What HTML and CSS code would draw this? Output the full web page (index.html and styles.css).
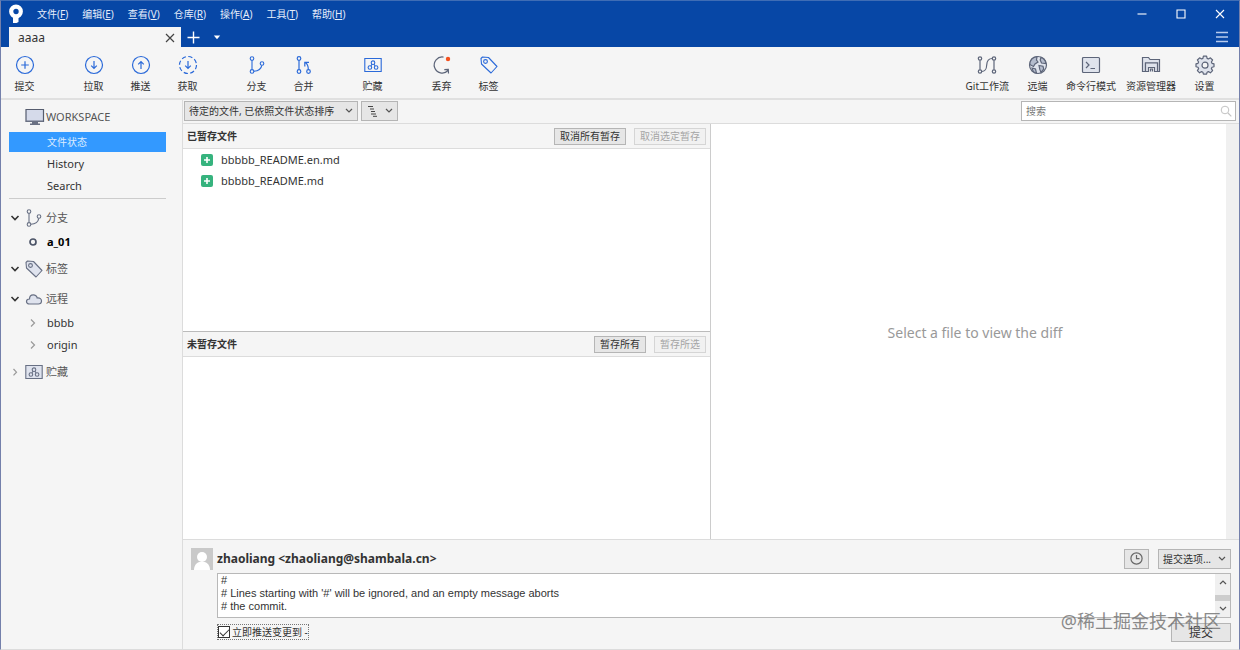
FILE: index.html
```
<!DOCTYPE html>
<html lang="zh-CN">
<head>
<meta charset="utf-8">
<title>aaaa</title>
<link rel="stylesheet" href="styles.css">
</head>
<body>
<svg class="defs" aria-hidden="true">
  <symbol id="chevron" viewBox="0 0 8 6"><path d="M1 1l3 3 3-3" fill="none" stroke="currentColor" stroke-width="1.2"/></symbol>
  <symbol id="branch" viewBox="0 0 18 18"><g fill="none" stroke="currentColor" stroke-width="1.1"><circle cx="4" cy="2.6" r="1.8"/><circle cx="4" cy="15.4" r="1.8"/><circle cx="14" cy="7.5" r="1.8"/><path d="M4 4.4v9.2M5.8 15.2c4-.2 7.400-2.400 8-5.900"/></g></symbol>
  <symbol id="tag" viewBox="0 0 18 18"><g stroke="currentColor" stroke-width="1.1" stroke-linejoin="round"><path d="M1 2.500L2.500 1l6 .5L17 10.500 11 17 1.500 8z"/><circle cx="5.500" cy="5.500" r="1.900"/></g></symbol>
  <symbol id="stash" viewBox="0 0 18 16"><g stroke="currentColor" stroke-width="1.100"><path d="M.8 1.500h16.400v13H.8z"/><g fill="none"><circle cx="9" cy="5.700" r="1.800"/><circle cx="5.900" cy="10.500" r="1.800"/><circle cx="12.100" cy="10.500" r="1.800"/><path d="M8 7.300L6.900 9M10 7.300L11.100 9"/></g></g></symbol>
</svg>
<div class="window">
  <header class="titlebar">
    <div class="menurow">
      <svg class="logo" viewBox="0 0 16 20"><circle cx="8" cy="7.500" r="4.800" fill="none" stroke="#fff" stroke-width="4.200"/><path d="M5 12.500h5.500V18l-2 1H5z" fill="#fff"/></svg>
      <nav class="menu">
        <button>文件(<u>F</u>)</button><button>编辑(<u>E</u>)</button><button>查看(<u>V</u>)</button><button>仓库(<u>R</u>)</button><button>操作(<u>A</u>)</button><button>工具(<u>T</u>)</button><button>帮助(<u>H</u>)</button>
      </nav>
      <div class="winctl">
        <button aria-label="最小化"><svg viewBox="0 0 10 10"><path d="M.5 5h9"/></svg></button>
        <button aria-label="最大化"><svg viewBox="0 0 10 10"><path d="M1 1h8v8H1z"/></svg></button>
        <button aria-label="关闭"><svg viewBox="0 0 10 10"><path d="M1 1l8 8M9 1L1 9"/></svg></button>
      </div>
    </div>
    <div class="tabrow">
      <div class="tab"><span>aaaa</span><button aria-label="关闭标签"><svg viewBox="0 0 10 10"><path d="M1 1l8 8M9 1L1 9"/></svg></button></div>
      <button class="tabbtn" aria-label="新建标签"><svg width="13" height="13" viewBox="0 0 13 13"><path d="M6.500.5v12M.5 6.500h12" stroke="#fff" stroke-width="1.400"/></svg></button>
      <button class="tabbtn" aria-label="标签列表"><svg width="8" height="5" viewBox="0 0 8 5"><path d="M.8.5h6.400L4 4.200z" fill="#fff"/></svg></button>
      <button class="hamburger" aria-label="菜单"><svg width="12" height="12" viewBox="0 0 12 12"><path d="M0 1.500h12M0 6h12M0 10.500h12" stroke="#b7cbed" stroke-width="1.400"/></svg></button>
    </div>
  </header>

  <div class="toolbar">
    <div class="tools">
      <button class="tool"><svg viewBox="0 0 20 20"><circle cx="10" cy="10" r="8.500"/><path d="M10 6.200v7.600M6.200 10h7.600"/></svg>提交</button>
    </div>
    <div class="tools">
      <button class="tool"><svg viewBox="0 0 20 20"><circle cx="10" cy="10" r="8.500"/><path d="M10 6v7.500M7.200 10.700l2.800 2.800 2.800-2.800"/></svg>拉取</button>
      <button class="tool"><svg viewBox="0 0 20 20"><circle cx="10" cy="10" r="8.500"/><path d="M10 14V6.500M7.200 9.300L10 6.500l2.800 2.800"/></svg>推送</button>
      <button class="tool"><svg viewBox="0 0 20 20"><circle cx="10" cy="10" r="8.500" stroke-dasharray="4.300 2.376"/><path d="M10 6v7.500M7.200 10.700l2.800 2.800 2.800-2.800"/></svg>获取</button>
    </div>
    <div class="tools">
      <button class="tool"><svg viewBox="0 0 20 20"><use href="#branch" x="1" y="1" width="18" height="18"/></svg>分支</button>
      <button class="tool"><svg viewBox="0 0 20 20"><circle cx="5" cy="3.500" r="1.800"/><circle cx="5" cy="16.500" r="1.800"/><circle cx="14.500" cy="16.500" r="1.800"/><path d="M5 5.300v9.400M14.300 14.600c0-3-.8-5.500-3-7M10.800 11.500V7.300H15"/></svg>合并</button>
    </div>
    <div class="tools">
      <button class="tool"><svg viewBox="0 0 20 20"><use href="#stash" x="1" y="2" width="18" height="16"/></svg>贮藏</button>
    </div>
    <div class="tools">
      <button class="tool tool-dark"><svg viewBox="0 0 20 20"><path d="M11.500 2.100A8 8 0 1 0 16 15.500M12.300 14.700l4-.2.2 4" fill="none"/><circle cx="16" cy="4" r="2.200" fill="#f4511e" stroke="none"/></svg>丢弃</button>
      <button class="tool"><svg viewBox="0 0 20 20"><use href="#tag" x="1" y="1" width="18" height="18"/></svg>标签</button>
    </div>
    <div class="tools tools-right">
      <button class="tool tool-dark"><svg viewBox="0 0 20 20"><circle cx="3" cy="3.500" r="1.700"/><circle cx="3" cy="16.500" r="1.700"/><circle cx="17" cy="3.500" r="1.700"/><circle cx="17" cy="16.500" r="1.700"/><path d="M3 5.200v9.600M17 5.200v9.600M4.700 16.500c4.300 0 4.800-3 5-6.500s1-6.500 5.600-6.500"/></svg>Git工作流</button>
      <button class="tool tool-dark"><svg viewBox="0 0 20 20"><circle cx="10" cy="10" r="8.500" fill="#dfe3ec"/><path fill="#b4bccd" d="M9 1.600L8.500 5l1.500 2-3 2-1.500 2.500L1.800 9.500C2 5 5 2 9 1.600zM13 2.200L12.200 5l1.300 3 4.500.5c-.6-3-2.500-5.300-5-6.300zM11 10.500l4 .7.700 2.800-2.700 3.400-1.200-3zM4 13l3.500 1 1 4.200C6 17.700 4.500 16 4 13z"/></svg>远端</button>
      <button class="tool tool-dark"><svg viewBox="0 0 20 20"><rect x="1.500" y="2.500" width="17" height="15" rx="1" fill="#dfe3ec"/><path d="M5 7l3 3-3 3M9.500 13.500H14"/></svg>命令行模式</button>
      <button class="tool tool-dark"><svg viewBox="0 0 20 20"><path fill="#dfe3ec" d="M1.500 16.500v-14h6l1.500 2h9.500v12h-2V8h-12v8.500z"/><path fill="#dfe3ec" d="M4.500 8h12v8.500h-3v-4h-6v4h-3zM9.500 16.500V14h2v2.500"/></svg>资源管理器</button>
      <button class="tool tool-dark"><svg viewBox="0 0 20 20"><path fill="#dfe3ec" stroke-linejoin="round" d="M8.400 1.200h3.200l.5 2.200 1.300.6 2-1.200 2.200 2.200-1.200 2 .6 1.300 2 .5v2.900l-2 .6-.6 1.300 1.200 2-2.200 2.200-2-1.200-1.300.6-.5 2H8.400l-.5-2-1.300-.6-2 1.200-2.200-2.200 1.200-2-.6-1.300-2-.6V8.800l2-.5.6-1.300-1.200-2 2.200-2.200 2 1.200 1.300-.6z"/><circle cx="10" cy="10.200" r="3" fill="#f5f5f5"/></svg>设置</button>
    </div>
  </div>

  <div class="main">
    <aside class="sidebar">
      <h2 class="side-head workspace"><svg width="20" height="18" viewBox="0 0 20 18"><path d="M1 1.500h17.500v12H1z" fill="#d5daea" stroke="#555c6e" stroke-width="1.200"/><path d="M1 12.500h17.500v1.500H1zM7 14h6v1.500h2V17H5v-1.500h2z" fill="#6a7183"/></svg>WORKSPACE</h2>
      <ul class="side-list work-list">
        <li><a class="selected" href="#status">文件状态</a></li>
        <li><a href="#history">History</a></li>
        <li><a href="#search">Search</a></li>
      </ul>
      <div class="sections">
        <section>
          <h2 class="side-head"><svg class="arrow" viewBox="0 0 10 8"><path d="M1.500 2L5 5.500 8.500 2"/></svg><svg class="side-icon" viewBox="0 0 18 18"><use href="#branch"/></svg>分支</h2>
          <ul class="side-list"><li><a class="current" href="#a_01"><svg class="bullet" viewBox="0 0 10 10"><circle cx="5" cy="5" r="3" fill="none" stroke="#4d5568" stroke-width="1.700"/></svg>a_01</a></li></ul>
        </section>
        <section class="leaf">
          <h2 class="side-head"><svg class="arrow" viewBox="0 0 10 8"><path d="M1.500 2L5 5.500 8.500 2"/></svg><svg class="side-icon filled" viewBox="0 0 18 18"><use href="#tag"/></svg>标签</h2>
        </section>
        <section>
          <h2 class="side-head"><svg class="arrow" viewBox="0 0 10 8"><path d="M1.500 2L5 5.500 8.500 2"/></svg><svg class="side-icon filled" viewBox="0 0 18 18"><path d="M4.500 14C2.500 14 1.500 13 1.500 11.500S2.500 9 4.500 9C4.500 6.500 6 4.800 8.200 4.800S11.800 6 12.200 8c2.800-.3 4.300 1 4.300 3s-1.200 3-3.200 3z" stroke="currentColor" stroke-width="1.200"/></svg>远程</h2>
          <ul class="side-list">
            <li><a href="#bbbb"><svg class="bullet closed" viewBox="0 0 10 10"><path d="M3 1.500L6.500 5 3 8.500"/></svg>bbbb</a></li>
            <li><a href="#origin"><svg class="bullet closed" viewBox="0 0 10 10"><path d="M3 1.500L6.500 5 3 8.500"/></svg>origin</a></li>
          </ul>
        </section>
        <section>
          <h2 class="side-head"><svg class="arrow closed" viewBox="0 0 10 8"><path d="M3.500 1L6.500 4.200l-3 3.200"/></svg><svg class="side-icon filled" viewBox="0 0 18 16"><use href="#stash"/></svg>贮藏</h2>
        </section>
      </div>
    </aside>

    <main class="content">
      <div class="filterbar">
        <div class="selectbox sort"><select aria-label="排序"><option>待定的文件, 已依照文件状态排序</option></select><svg class="chev"><use href="#chevron"/></svg></div>
        <button class="btn viewbtn" aria-label="视图"><svg width="10" height="12" viewBox="0 0 10 12"><path d="M0 1.500h5M2 4h4M3 6.500h4M3 9h5M5 11.300h4" stroke="#444" stroke-width="1"/></svg><svg class="chev"><use href="#chevron"/></svg></button>
        <div class="search"><input type="text" aria-label="搜索" placeholder="搜索"><svg width="12" height="12" viewBox="0 0 12 12"><circle cx="5" cy="5" r="3.800" fill="none" stroke="#c3c3c3"/><path d="M8 8l3.300 3.300" stroke="#c3c3c3" stroke-width="1.200"/></svg></div>
      </div>
      <div class="panes">
        <div class="files">
          <section class="filegroup">
            <header><h3>已暂存文件</h3><button class="btn">取消所有暂存</button><button class="btn" disabled>取消选定暂存</button></header>
            <ul class="filelist">
              <li><svg viewBox="0 0 12 12"><rect width="12" height="12" rx="2" fill="#36b37e"/><path d="M6 3v6M3 6h6" stroke="#fff" stroke-width="1.600"/></svg>bbbbb_README.en.md</li>
              <li><svg viewBox="0 0 12 12"><rect width="12" height="12" rx="2" fill="#36b37e"/><path d="M6 3v6M3 6h6" stroke="#fff" stroke-width="1.600"/></svg>bbbbb_README.md</li>
            </ul>
          </section>
          <section class="filegroup">
            <header><h3>未暂存文件</h3><button class="btn">暂存所有</button><button class="btn" disabled>暂存所选</button></header>
          </section>
        </div>
        <div class="diff"><p>Select a file to view the diff</p><div class="strip"></div></div>
      </div>
      <form class="commit">
        <svg class="avatar" viewBox="0 0 22 22"><path d="M0 0h22v22H0z" fill="#c9c9c9"/><circle cx="11" cy="9" r="5" fill="#fff"/><path d="M3 22c0-5 3-7.500 5.500-8h5c2.500.5 5.500 3 5.500 8z" fill="#fff"/></svg>
        <div class="commit-body">
          <div class="commit-head">
            <strong>zhaoliang &lt;zhaoliang@shambala.cn&gt;</strong>
            <button type="button" class="btn clock" aria-label="历史提交信息"><svg width="13" height="13" viewBox="0 0 13 13"><g fill="none" stroke="#666" stroke-width="1.200"><circle cx="6.500" cy="6.500" r="5.600"/><path d="M6.500 3v3.700h3"/></g></svg></button>
            <div class="selectbox options"><select aria-label="提交选项"><option>提交选项...</option></select><svg class="chev"><use href="#chevron"/></svg></div>
          </div>
          <div class="message">
            <textarea aria-label="提交信息" rows="3">#
# Lines starting with '#' will be ignored, and an empty message aborts
# the commit.</textarea>
            <div class="scroll"><svg class="chev up"><use href="#chevron"/></svg><i></i><svg class="chev"><use href="#chevron"/></svg></div>
          </div>
          <div class="commit-foot">
            <label class="push"><input type="checkbox" checked>立即推送变更到 -</label>
            <button type="button" class="btn submit">提交</button>
          </div>
        </div>
        <div class="watermark">@稀土掘金技术社区</div>
      </form>
    </main>
  </div>
</div>
</body>
</html>
```
FILE: styles.css
```
* { box-sizing: border-box; }
body, h2, h3, p, ul { margin: 0; padding: 0; }
ul { list-style: none; }
body {
  font: 11px/14px "Noto Sans", "Noto Sans CJK SC", sans-serif;
  color: #333;
  background: #f5f5f5;
}
button, select, input { font: inherit; color: inherit; }
button { border: 0; padding: 0; background: none; }
a { color: inherit; text-decoration: none; }
.defs { position: absolute; width: 0; height: 0; }

.window {
  display: flex;
  flex-direction: column;
  min-height: 100vh;
  border: 1px solid #7480ab;
  border-top-color: #3f6db5;
  border-bottom-color: #dcdcdc;
}

.titlebar { background: #0747a6; color: #e6eefb; }
.menurow { display: flex; align-items: center; height: 26px; padding-left: 7px; }
.logo { width: 16px; height: 20px; }
.menu { display: flex; gap: 14px; margin-left: 13px; font-size: 10px; }
.winctl { display: flex; margin-left: auto; }
.winctl button { display: grid; place-items: center; width: 39px; height: 24px; }
.winctl svg { width: 10px; height: 10px; fill: none; stroke: #fff; stroke-width: 1.1; }
.tabrow { display: flex; align-items: stretch; height: 20px; padding-left: 8px; }
.tab {
  display: flex;
  align-items: center;
  justify-content: space-between;
  width: 172px;
  padding: 2px 6px 0 9px;
  background: #f5f5f5;
  color: #333;
  font-size: 12px;
}
.tab svg { display: block; width: 10px; height: 10px; stroke: #444; stroke-width: 1.2; }
.tabbtn { display: grid; place-items: center; width: 24px; }
.hamburger { margin: 0 11px 0 auto; }
.hamburger svg { display: block; }

.toolbar {
  display: flex;
  gap: 22px;
  height: 53px;
  padding: 8px 11px 0 0;
  border-bottom: 2px solid #e0e0e0;
  font-size: 10px;
}
.tools { display: flex; }
.tools-right { margin-left: auto; }
.tool {
  display: flex;
  flex-direction: column;
  align-items: center;
  gap: 4px;
  min-width: 47px;
  height: 38px;
  padding: 0 5px;
  white-space: nowrap;
}
.tool svg { width: 20px; height: 20px; flex: none; fill: none; stroke: #2b6ad9; stroke-width: 1.2; color: #2b6ad9; }
.tool-dark svg { stroke: #5d6579; }

.main { display: flex; flex: 1; }
.sidebar { width: 182px; padding: 7px 16px 0 8px; border-right: 1px solid #dcdcdc; }
.side-head { display: flex; align-items: center; height: 20px; font-size: 11px; font-weight: 400; color: #555; }
.workspace { padding-left: 16px; gap: 1px; }
.side-list { display: grid; gap: 2px; margin-top: 4px; }
.side-list a { display: flex; align-items: center; height: 20px; padding-left: 38px; }
.work-list { margin-top: 5px; padding-bottom: 2px; border-bottom: 1px solid #ccc; }
.side-list .selected { background: #3399ff; color: #dcecff; font-size: 10px; }
.side-list .current { color: #000; font-weight: 700; }
.sections { display: grid; gap: 7px; margin-top: 9px; }
.leaf { padding-bottom: 3px; }
.arrow { width: 10px; height: 8px; margin: 0 5px 0 1px; fill: none; stroke: #333; stroke-width: 1.6; }
.side-icon { width: 18px; height: 18px; margin-right: 3px; fill: none; color: #687084; }
.filled { fill: #dfe3ee; }
.bullet { width: 10px; height: 10px; margin: 0 9px 0 -19px; }
.closed { fill: none; stroke: #999; stroke-width: 1.2; }

.content { display: flex; flex: 1; flex-direction: column; min-width: 0; }
.filterbar { display: flex; gap: 3px; height: 24px; padding: 1px 3px 2px 1px; border-bottom: 1px solid #dcdcdc; }
.btn, .selectbox { border: 1px solid #b5b5b5; background: #e6e6e6; font-size: 10px; line-height: 14px; white-space: nowrap; }
.btn:disabled { border-color: #d5d5d5; background: #f1f1f1; color: #a5a5a5; }
.selectbox { display: flex; align-items: center; }
.selectbox select { flex: 1; height: 100%; border: 0; padding: 0 4px; background: none; appearance: none; }
.chev { width: 8px; height: 6px; flex: none; color: #555; }
.selectbox .chev { margin-right: 4px; }
.sort { width: 174px; }
.viewbtn { display: flex; align-items: center; justify-content: space-between; width: 37px; padding: 0 4px 0 6px; }
.search { display: flex; align-items: center; width: 215px; margin-left: auto; padding: 0 3px 0 4px; border: 1px solid #b5b5b5; background: #fff; }
.search input { flex: 1; min-width: 0; border: 0; padding: 0; background: none; font-size: 10px; outline: 0; }
.search input::placeholder { color: #777; }

.panes { display: grid; grid-template-columns: 1fr 1fr; flex: 1; background: #fff; }
.files { display: flex; flex-direction: column; border-right: 1px solid #ccc; }
.filegroup { flex: 1; }
.filegroup + .filegroup { border-top: 1px solid #bbb; }
.filegroup header { display: flex; align-items: center; gap: 8px; height: 25px; padding: 0 4px; border-bottom: 1px solid #dcdcdc; background: #f5f5f5; }
.filegroup h3 { flex: 1; font-size: 10px; font-weight: 700; }
.filegroup .btn { height: 17px; padding: 0 5px; }
.filelist { padding: 0 18px; }
.filelist li { display: flex; align-items: center; gap: 8px; height: 21px; }
.filelist svg { width: 12px; height: 12px; }
.diff { display: flex; align-items: center; color: #999; font-size: 14px; }
.diff p { flex: 1; padding: 2px 0 0 13px; text-align: center; }
.strip { align-self: stretch; width: 13px; background: #f0f0f0; }

.commit { position: relative; display: flex; gap: 4px; padding: 8px 8px 7px; border-top: 1px solid #dcdcdc; }
.avatar { width: 22px; height: 22px; flex: none; }
.commit-body { flex: 1; }
.commit-head { display: flex; align-items: center; height: 21px; gap: 9px; }
.commit-head strong { flex: 1; font-size: 12px; }
.clock { display: grid; place-items: center; width: 25px; height: 20px; }
.options { width: 73px; height: 20px; }
.message { display: flex; height: 45px; margin-top: 4px; border: 1px solid #b8b8b8; background: #fff; }
.message textarea {
  flex: 1;
  border: 0;
  padding: 0 3px;
  background: none;
  color: #333;
  font: 11px/13px "Liberation Sans", sans-serif;
  resize: none;
  overflow: hidden;
  outline: 0;
}
.scroll { display: flex; flex-direction: column; align-items: center; width: 15px; padding: 5px 0; background: #f0f0f0; }
.scroll i { width: 100%; height: 6px; margin: 10px 0 5px; background: #cdcdcd; }
.up { transform: rotate(180deg); }
.commit-foot { display: flex; justify-content: space-between; padding-top: 5px; }
.push { display: flex; align-items: center; gap: 2px; height: 16px; margin-top: 1px; border: 1px dotted #777; font-size: 10px; }
.push input { display: grid; place-items: center; width: 12px; height: 12px; margin: 0; border: 1px solid #333; background: #fff; appearance: none; }
.push input:checked::after { content: ""; width: 8px; height: 4px; margin-bottom: 2px; border: solid #333; border-width: 0 0 1px 1px; transform: rotate(-45deg); }
.submit { width: 60px; height: 19px; font-size: 12px; }
.watermark { position: absolute; right: 18px; bottom: 16px; color: #777; font-size: 18px; line-height: 24px; opacity: .85; pointer-events: none; }
```
